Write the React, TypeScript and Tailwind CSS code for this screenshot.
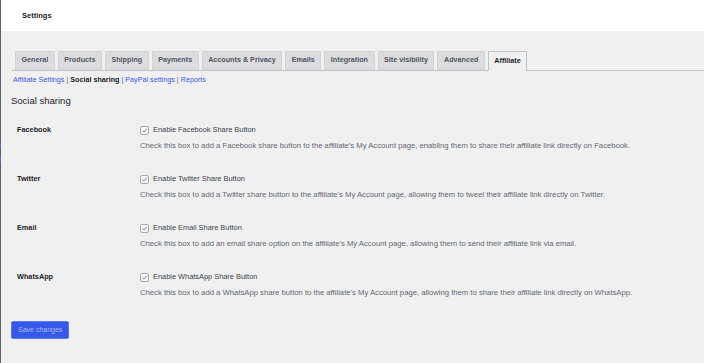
import React from 'react'

const tabs = [
  'General',
  'Products',
  'Shipping',
  'Payments',
  'Accounts & Privacy',
  'Emails',
  'Integration',
  'Site visibility',
  'Advanced',
  'Affiliate',
]

const rows = [
  {
    label: 'Facebook',
    check: 'Enable Facebook Share Button',
    desc: "Check this box to add a Facebook share button to the affiliate's My Account page, enabling them to share their affiliate link directly on Facebook.",
  },
  {
    label: 'Twitter',
    check: 'Enable Twitter Share Button',
    desc: "Check this box to add a Twitter share button to the affiliate's My Account page, allowing them to tweet their affiliate link directly on Twitter.",
  },
  {
    label: 'Email',
    check: 'Enable Email Share Button',
    desc: "Check this box to add an email share option on the affiliate's My Account page, allowing them to send their affiliate link via email.",
  },
  {
    label: 'WhatsApp',
    check: 'Enable WhatsApp Share Button',
    desc: "Check this box to add a WhatsApp share button to the affiliate's My Account page, allowing them to share their affiliate link directly on WhatsApp.",
  },
]

function Checkbox() {
  return (
    <span className="flex h-[9px] w-[9px] items-center justify-center rounded-[2px] border border-[#a7aaad] bg-[#f6f7f7]">
      <svg viewBox="0 0 10 10" className="h-[7px] w-[7px]" aria-hidden="true">
        <path d="M2 5.2 4.1 7.3 8 2.6" fill="none" stroke="#646970" strokeWidth="1.2" />
      </svg>
    </span>
  )
}

export default function App() {
  return (
    <div className="flex min-h-[363px] w-[704px] bg-[#f0f0f1] font-['Liberation_Sans',Arial,sans-serif] text-[#1d2327]">
      {/* cut-off admin menu edge */}
      <div className="flex w-px shrink-0 flex-col bg-[#5f6368]">
        <div className="h-[143px]" />
        <div className="h-[5px] bg-[#4a6cf7]" />
        <div className="h-[8px]" />
        <div className="h-[6px] bg-[#4a6cf7]" />
      </div>

      <div className="flex min-w-0 flex-1 flex-col">
        <div className="flex h-[31px] items-center bg-white pl-[21px]">
          <span className="text-[7.5px] font-bold">Settings</span>
        </div>

        <div className="mt-[20px] ml-[11px] flex items-end gap-[3px] border-b border-[#c3c4c7] pl-[3px]">
          {tabs.map((t) => {
            const active = t === 'Affiliate'
            return (
              <div
                key={t}
                className={
                  active
                    ? '-mb-px flex h-[20px] items-center border border-b-0 border-[#c3c4c7] bg-[#f0f0f1] px-[5.5px] text-[7.2px] font-bold text-[#1d2327]'
                    : 'flex h-[19px] items-center border border-[#d3d4d6] bg-[#dcdcde] px-[5.5px] text-[7.2px] font-bold text-[#50575e]'
                }
              >
                {t}
              </div>
            )
          })}
        </div>

        <div className="mt-[4px] flex h-[10px] items-center pl-[12px] text-[7.2px] text-[#3858e9]">
          <span>Affiliate Settings</span>
          <span className="mx-[2px] text-[#50575e]">|</span>
          <span className="font-bold text-[#1d2327]">Social sharing</span>
          <span className="mx-[2px] text-[#50575e]">|</span>
          <span>PayPal settings</span>
          <span className="mx-[2px] text-[#50575e]">|</span>
          <span>Reports</span>
        </div>

        <h2 className="mt-[9px] flex h-[14px] items-center pl-[10px] text-[9.5px] font-medium">Social sharing</h2>

        <div className="mt-[10px] flex flex-col pl-[16px]">
          {rows.map((r) => (
            <div key={r.label} className="grid h-[49px] grid-cols-[123px_1fr] pt-[6px]">
              <div className="flex h-[12px] items-center text-[7.3px] font-bold">{r.label}</div>
              <div>
                <label className="flex h-[12px] items-center gap-[4px] text-[7.4px] text-[#3c434a]">
                  <Checkbox />
                  {r.check}
                </label>
                <p className="mt-[4px] flex h-[12px] items-center text-[7.7px] text-[#646970]">{r.desc}</p>
              </div>
            </div>
          ))}
        </div>

        <div className="mt-[7px] pl-[10px]">
          <button className="flex h-[18px] items-center rounded-[2px] border border-[#5a78f0] bg-[#3858e9] px-[6px] text-[7px] text-[#a9b8f6]">
            Save changes
          </button>
        </div>
      </div>
    </div>
  )
}
